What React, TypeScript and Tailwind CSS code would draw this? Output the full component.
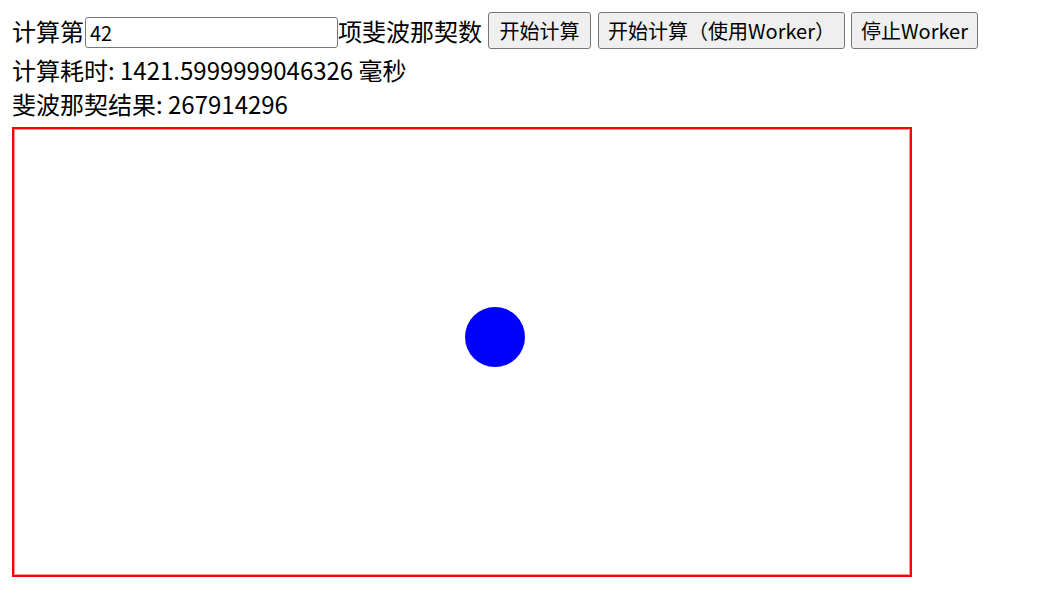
import { useState } from "react";

const font = { fontFamily: '"Noto Sans CJK SC", "Noto Sans", sans-serif' };

export default function App() {
  const [n, setN] = useState("42");

  const btn =
    "h-[37px] rounded-[3px] border border-[#767676] bg-[#efefef] text-[20px] leading-none text-black flex items-center justify-center";

  return (
    <div className="min-h-screen bg-white p-3 text-black" style={font}>
      {/* controls */}
      <div className="flex h-[41px] items-start">
        <span className="text-[24px] leading-[37px]">计算第</span>
        <input
          value={n}
          onChange={(e) => setN(e.target.value)}
          className="ml-px mt-[5px] h-[31px] w-[253px] rounded-[3px] border border-[#767676] bg-white pl-[4px] text-[20px] outline-none"
          style={font}
        />
        <span className="text-[24px] leading-[37px]">项斐波那契数</span>
        <button className={`${btn} ml-[6px] w-[103px]`} style={font}>开始计算</button>
        <button className={`${btn} ml-[7px] w-[247px]`} style={font}>开始计算（使用Worker）</button>
        <button className={`${btn} ml-[6px] w-[127px]`} style={font}>停止Worker</button>
      </div>

      {/* results */}
      <div className="text-[24px] leading-[34px]">计算耗时: 1421.5999999046326 毫秒</div>
      <div className="text-[24px] leading-[34px]">斐波那契结果: 267914296</div>

      {/* canvas */}
      <div className="relative mt-[6px] h-[450px] w-[900px] border-2 border-[#ff0000] bg-white shadow-[inset_0_0_0_1px_#ff9a9a]">
        <div className="absolute left-[451px] top-[178px] h-[60px] w-[60px] rounded-full bg-[#0000ff]" />
      </div>
    </div>
  );
}
